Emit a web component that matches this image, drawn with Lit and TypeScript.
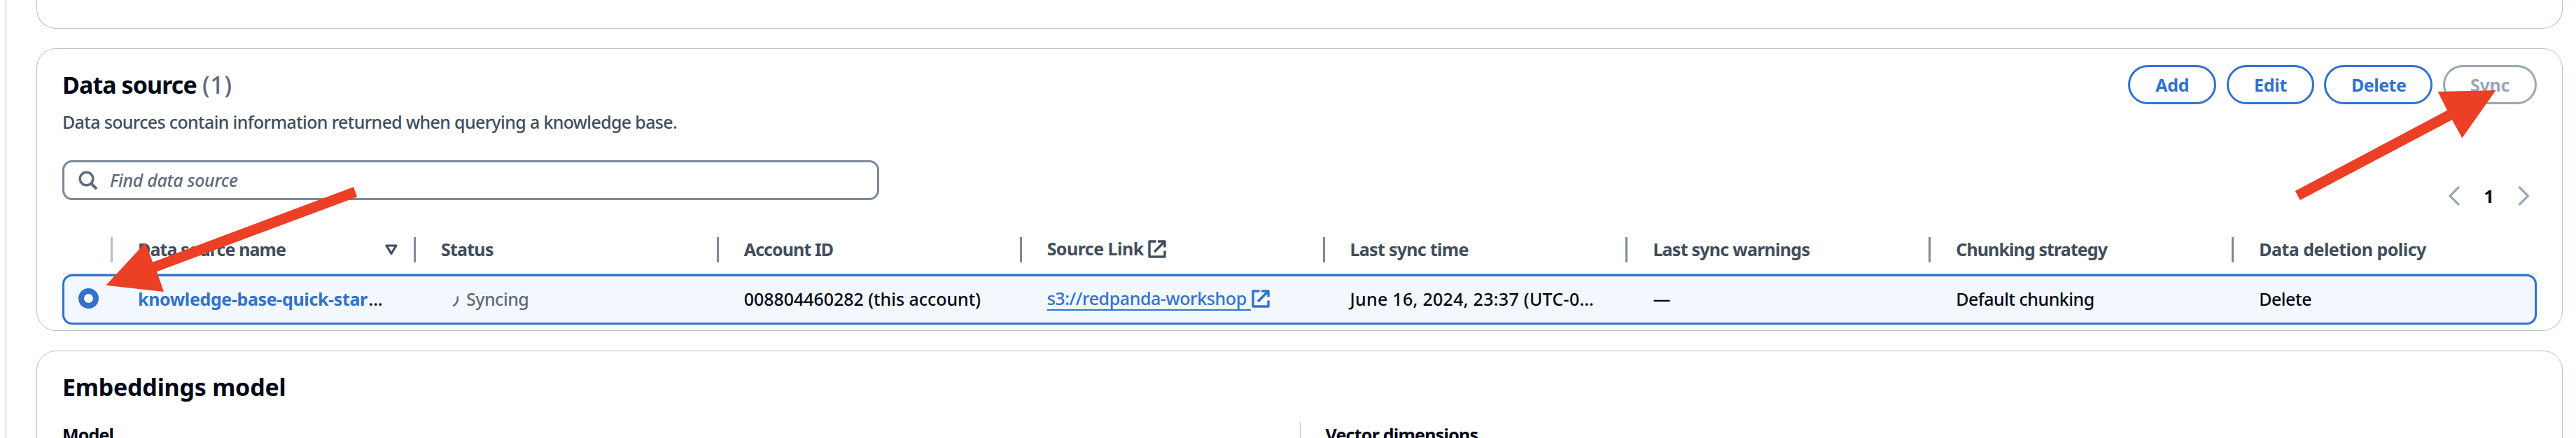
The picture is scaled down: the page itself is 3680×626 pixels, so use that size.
import { LitElement, html, css, svg, nothing } from 'lit';
import { customElement, property } from 'lit/decorators.js';

const FAMILY = '"Noto Sans", "Open Sans", sans-serif';
const pen = document.createElement('canvas').getContext('2d')!;

/** A single line of text, tracked so that its glyphs span `span` pixels. */
@customElement('tracked-text')
export class TrackedText extends LitElement {
  @property() text = '';
  @property({ type: Number }) span = 0;
  @property({ type: Number }) size = 25;
  @property({ type: Number }) weight = 460;
  @property({ type: Boolean }) slanted = false;

  static styles = css`
    :host { display: block; white-space: pre; }
    span { display: block; }
  `;

  render() {
    pen.font = `${this.slanted ? 'italic ' : ''}${this.weight} ${this.size}px ${FAMILY}`;
    const m = pen.measureText(this.text);
    const ink = m.actualBoundingBoxLeft + m.actualBoundingBoxRight;
    const gap = this.text.length > 1 ? (this.span - ink) / (this.text.length - 1) : 0;
    return html`<span
      style="font-family:${FAMILY};font-size:${this.size}px;font-weight:${this.weight};font-style:${this.slanted ? 'italic' : 'normal'};letter-spacing:${gap.toFixed(3)}px;margin-right:${gap.toFixed(3)}px"
      >${this.text}</span>`;
  }
}

const label = (text: string, span: number, weight = 460, size = 25, slanted = false) =>
  html`<tracked-text .text=${text} .span=${span} .weight=${weight} .size=${size} .slanted=${slanted}></tracked-text>`;

const externalIcon = html`<svg class="external" viewBox="0 0 26 26" width="26" height="26">
  ${svg`<path d="M11.500 2H2v22h22v-8.500M14 2h10v8.500M24 2 9 17" fill="none" stroke="currentColor" stroke-width="3.4" stroke-linejoin="round"/>`}
</svg>`;

const columns = [
  { name: 'Data source name', span: 209, sortable: true },
  { name: 'Status', span: 74 },
  { name: 'Account ID', span: 127 },
  { name: 'Source Link', span: 138, external: true },
  { name: 'Last sync time', span: 167 },
  { name: 'Last sync warnings', span: 222 },
  { name: 'Chunking strategy', span: 216.5 },
  { name: 'Data deletion policy', span: 238 },
];

const actions = [
  { name: 'Add', span: 46.5, cls: 'add' },
  { name: 'Edit', span: 45.5, cls: 'edit' },
  { name: 'Delete', span: 76, cls: 'delete' },
  { name: 'Sync', span: 55.5, cls: 'sync' },
];

@customElement('app-root')
export class AppRoot extends LitElement {
  static styles = css`
    :host {
      display: block; position: relative; width: 3680px; height: 626px;
      overflow: hidden; background: #fff; color: #000716;
      --line: #b6bec9; --blue: #3172cf; --grey: #5f6b7a; --head: #414d5c;
    }
    * { box-sizing: border-box; }
    .page {
      display: flex; flex-direction: column; gap: 28px; height: 626px;
      margin-left: 8px; padding: 0 19px 0 43px; border-left: 1px solid var(--line);
    }
    .card { flex: none; border: 1px solid var(--line); border-radius: 28px; padding: 0 36px; background: #fff; }
    .card.previous { height: 41px; border-top: 0; border-radius: 0 0 28px 28px; }
    .card.source { height: 404px; padding-top: 23px; }
    .card.model { height: 180px; padding-top: 31px; }
    .header { display: flex; justify-content: space-between; height: 99px; }
    .title { display: flex; gap: 9px; margin: 8px 0 15px 0; line-height: 40px; height: 40px; }
    .count { color: var(--grey); }
    .description { line-height: 36px; height: 36px; color: var(--head); }
    .actions { display: flex; gap: 14.600px; }
    .button {
      display: flex; align-items: center; justify-content: center; height: 56px;
      border: 3px solid var(--blue); border-radius: 28px; color: var(--blue);
      line-height: 36px; padding-bottom: 1px;
    }
    .add { width: 126px; } .edit { width: 125px; } .delete { width: 155px; }
    .sync { width: 134px; border-color: #9ba7b6; color: #9ba7b6; }
    .tools { display: flex; justify-content: space-between; height: 57px; margin-top: 37px; }
    .search {
      display: flex; align-items: center; width: 1167px; height: 57px; padding-left: 20px;
      border: 3px solid #7d8998; border-radius: 14px; color: var(--grey); line-height: 36px;
    }
    .search svg { margin-right: 17px; }
    .search tracked-text { margin-bottom: 1px; }
    .pages { display: flex; align-items: center; height: 57px; margin: 22px 7px 0 0; line-height: 36px; }
    .pages tracked-text { width: 11px; margin: 0 37.500px 0 32.500px; }
    .grid { display: grid; grid-template-columns: 72px repeat(8, minmax(0, 1fr)); }
    .head { height: 69px; margin-top: 37px; border-bottom: 1px solid var(--line); color: var(--head); }
    .cell { display: flex; align-items: center; padding: 0 0 3px 36px; line-height: 36px; min-width: 0; }
    .head .cell {
      background: linear-gradient(#7d8998, #7d8998) right center / 3px 36px no-repeat;
    }
    .head .cell:first-child { background-image: linear-gradient(var(--line), var(--line)); }
    .head .cell:last-child { background: none; }
    .head .linked { padding-bottom: 5px; }
    .head .external { margin: 3px 0 0 7px; }
    .sort { margin: 3px 25px 0 auto; }
    .row {
      height: 72px; background: #f2f8fd; border-radius: 14px;
      box-shadow: inset 0 0 0 3px var(--blue);
    }
    .row .cell:first-child { padding: 0 0 0 23px; }
    .radio { width: 29px; height: 29px; border-radius: 50%; background: #fff; border: 8.5px solid var(--blue); margin-bottom: 3px; }
    .name { color: var(--blue); margin-right: 2px; }
    .status { color: var(--grey); padding-left: 51px; }
    .status svg { margin: 9px 9px 0 0; }
    .link { color: var(--blue); padding-bottom: 4px; }
    .anchor { display: flex; width: 291px; height: 36px; border-bottom: 2px solid var(--blue); line-height: 36px; }
    .link .external { margin: 2px 0 0 1px; }
    .section { line-height: 40px; height: 40px; margin: 0 0 30px 0; }
    .facts { display: grid; grid-template-columns: 1fr 1fr; height: 110px; line-height: 36px; }
    .facts .fact + .fact { border-left: 1px solid var(--line); padding-left: 36px; }
    .arrows { position: absolute; inset: 0; pointer-events: none; }
  `;

  render() {
    return html`
      <main class="page">
        <section class="card previous"></section>

        <section class="card source">
          <div class="header">
            <div>
              <div class="title">
                ${label('Data source', 189.5, 700, 34)}
                <span class="count">${label('(1)', 40.5, 460, 34)}</span>
              </div>
              <div class="description">
                ${label('Data sources contain information returned when querying a knowledge base.', 876)}
              </div>
            </div>
            <div class="actions">
              ${actions.map((a) => html`<div class="button ${a.cls}">${label(a.name, a.span, 670)}</div>`)}
            </div>
          </div>

          <div class="tools">
            <div class="search">
              <svg width="28" height="28" viewBox="0 0 28 28">
                <circle cx="11.5" cy="11.5" r="9.3" fill="none" stroke="currentColor" stroke-width="3.4" />
                <path d="M18 18l8 8" stroke="currentColor" stroke-width="4" />
              </svg>
              ${label('Find data source', 183, 460, 25, true)}
            </div>
            <div class="pages">
              <svg width="20" height="30" viewBox="0 0 20 30"><path d="M17 2 4 15l13 13" fill="none" stroke="#9ba7b6" stroke-width="3.2" /></svg>
              ${label('1', 9, 700)}
              <svg width="20" height="30" viewBox="0 0 20 30"><path d="M1.500 2l13 13-13 13" fill="none" stroke="#9ba7b6" stroke-width="3.2" /></svg>
            </div>
          </div>

          <div class="grid head">
            <div class="cell"></div>
            ${columns.map(
              (c) => html`<div class="cell ${c.external ? 'linked' : ''}">
                ${label(c.name, c.span, 670)}${c.external ? externalIcon : nothing}
                ${c.sortable
                  ? html`<svg class="sort" width="20" height="16" viewBox="0 0 20 16">
                      <path d="M3 2h14l-7 11.5z" fill="none" stroke="currentColor" stroke-width="3.2" stroke-linejoin="round" />
                    </svg>`
                  : nothing}
              </div>`
            )}
          </div>

          <div class="grid row">
            <div class="cell"><span class="radio"></span></div>
            <div class="cell"><span class="name">${label('knowledge-base-quick-star', 327, 670)}</span>${label('…', 22)}</div>
            <div class="cell status">
              <svg width="12" height="18" viewBox="0 0 12 18"><path d="M8.7 1.5c1 5.5-.8 10.500-6.500 14" fill="none" stroke="currentColor" stroke-width="2.600" /></svg>
              ${label('Syncing', 87.5)}
            </div>
            <div class="cell">${label('008804460282 (this account)', 336.5)}</div>
            <div class="cell link"><span class="anchor">${label('s3://redpanda-workshop', 284)}</span>${externalIcon}</div>
            <div class="cell">${label('June 16, 2024, 23:37 (UTC-0…', 349)}</div>
            <div class="cell">${label('—', 25)}</div>
            <div class="cell">${label('Default chunking', 194.5)}</div>
            <div class="cell">${label('Delete', 73)}</div>
          </div>
        </section>

        <section class="card model">
          <div class="section">${label('Embeddings model', 314.5, 700, 34)}</div>
          <div class="facts">
            <div class="fact">${label('Model', 70.5, 700)}</div>
            <div class="fact">${label('Vector dimensions', 218, 700)}</div>
          </div>
        </section>
      </main>

      <svg class="arrows" width="3680" height="626" viewBox="0 0 3680 626" fill="#eb4025">
        <path d="M505 267.300 510.300 281.300 224 388.300 234 417 151.300 407.700 207.700 347 218.300 374.700z" />
        <path d="M3278.800 273 3285.800 286 3503 171.300 3517.300 197.300 3565.500 129 3482.700 131 3496 157.700z" />
      </svg>
    `;
  }
}
